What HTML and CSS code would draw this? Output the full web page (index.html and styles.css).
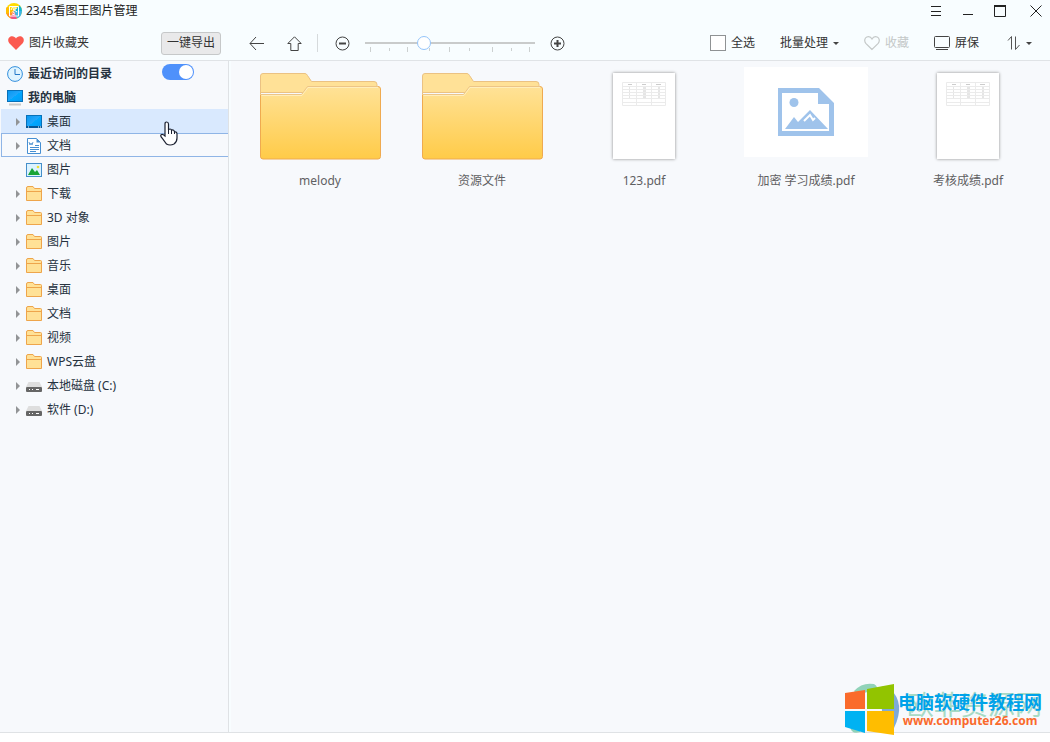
FILE: index.html
```html
<!DOCTYPE html>
<html lang="zh-CN">
<head>
<meta charset="utf-8">
<title>2345看图王图片管理</title>
<link rel="stylesheet" href="styles.css">
</head>
<body>
<svg class="defs" aria-hidden="true">
  <defs>
    <linearGradient id="front" x1="0" y1="0" x2="0" y2="1"><stop offset="0" stop-color="#ffe297"/><stop offset="1" stop-color="#ffcb48"/></linearGradient>
    <linearGradient id="screen" x1="0" y1="0" x2="1" y2="1"><stop offset="0" stop-color="#0796f0"/><stop offset=".5" stop-color="#22a6fb"/><stop offset=".5" stop-color="#00a8ff"/><stop offset="1" stop-color="#0698f2"/></linearGradient>
  </defs>
  <symbol id="folder" viewBox="0 0 16 16"><path d="M.5 14.500V2q0-1.500 1.500-1.500h5l1.500 2h6q1 0 1 1v11H.5z" fill="#ffe196" stroke="#eea54b"/><path d="M.5 5.500h15" stroke="#eea54b"/></symbol>
  <symbol id="drive" viewBox="0 0 16 16"><path d="M2.500 4h11L16 9H0z" fill="#dedede"/><rect y="9" width="16" height="5" rx="1" fill="#666"/><path d="M3 11.500h1m2 0h1m3 0h3" stroke="#fff"/></symbol>
  <symbol id="big-folder" viewBox="0 0 121 87"><path d="M.5 84V3Q.5.5 3 .5h42q1.500 0 2.500 2l4 6H114q3 0 3 3v8H.5z" fill="#ffe197" stroke="#ebc283"/><path d="M.5 83V21.500h41l6-8H118q2.500 0 2.500 2.500v67.500q0 2.500-2.500 2.500H3q-2.500 0-2.500-2.500z" fill="url(#front)"/><path d="M1 21.500h40.500l6-8H118" fill="none" stroke="#edc587"/><path d="M1.500 22.500H42l6-8h70" fill="none" stroke="#ffeebb"/><path d="M.5 22v61.500Q.5 86 3 86h115q2.500 0 2.500-2.500V16q0-2.500-2.500-2.500" fill="none" stroke="#efaa50"/></symbol>
  <symbol id="doc-table" viewBox="0 0 44 24"><path d="M.5.500h43v23H.5zM.5 4.500h43M.5 7.500h43M.5 10.500h43M.5 13.500h43M.5 16.500h43M.5 20.500h43M14.500 0v24M29.500 0v24" fill="none" stroke="#ebebeb"/><path d="M6 2.500h4m10 0h4m10 0h5M7 6h1m13 0h3m12 0h2M7 9h1m13 0h3m12 0h2M7 12h1m13 0h3m12 0h2M7 15h1m13 0h3m12 0h2" stroke="#ccc"/></symbol>
</svg>
<div class="window">
  <header class="titlebar">
    <svg class="logo" viewBox="0 0 16 16" aria-hidden="true"><circle cx="8" cy="8" r="8" fill="#ffdc00"/><path d="M1 4a8 8 0 0 0 3 11l4-7z" fill="#ff9426"/><path d="M1 4a8 8 0 0 0-.5 7L8 8z" fill="#ffc000"/><path d="M4 15a8 8 0 0 0 7 .4L8 8z" fill="#ef5488"/><path d="M11 15.400A8 8 0 0 0 16 8H8z" fill="#3cb6e8"/><path d="M16 8a8 8 0 0 0-2.500-5.800L8 8z" fill="#10b5d8"/><path d="M3.500 3.500h9v9.500h-9z" fill="none" stroke="#fff"/><path d="M6.500 4 5 7m2-2h3.500L6 9.500M7 6l4 3M7 9.500l2 .8M6 11l3 1" fill="none" stroke="#fff"/></svg>
    <h1 class="title">2345看图王图片管理</h1>
    <div class="window-controls">
      <button class="icon-button" aria-label="菜单"><svg width="12" height="12" viewBox="0 0 12 12"><path d="M1 1.500h10M1 6.500h10M1 10.500h10" stroke="#222"/></svg></button>
      <button class="icon-button" aria-label="最小化"><svg width="12" height="12" viewBox="0 0 12 12"><path d="M1 9.500h10" stroke="#222"/></svg></button>
      <button class="icon-button" aria-label="最大化"><svg width="12" height="12" viewBox="0 0 12 12"><path d="M.5 1v10.500h11V1" fill="none" stroke="#222"/><path d="M0 1h12" stroke="#222" stroke-width="2"/></svg></button>
      <button class="icon-button close" aria-label="关闭"><svg width="12" height="12" viewBox="0 0 12 12"><path d="M.5.500l11 11m0-11-11 11" stroke="#222"/></svg></button>
    </div>
  </header>

  <div class="toolbar">
    <div class="favorites">
      <svg width="16" height="16" viewBox="0 0 16 16" aria-hidden="true"><path d="M8 15 1.300 8.300C-.6 6 0 2.600 2.500 1.500 4.800.7 7 1.700 8 3.500 9 1.700 11.200.7 13.500 1.500 16 2.600 16.600 6 14.700 8.300z" fill="#fb5a50"/></svg>
      <span>图片收藏夹</span>
      <button class="export">一键导出</button>
    </div>
    <div class="tools">
      <div class="nav">
        <button class="icon-button" aria-label="后退"><svg width="15" height="15" viewBox="0 0 15 15"><path d="M7 1 1 7.500 7 14M1 7.500h14" fill="none" stroke="#444"/></svg></button>
        <button class="icon-button" aria-label="向上"><svg width="15" height="15" viewBox="0 0 15 15"><path d="M7.500.8.800 7.500h3v7h7.400v-7h3z" fill="none" stroke="#444"/></svg></button>
      </div>
      <span class="divider"></span>
      <div class="zoom">
        <button class="icon-button" aria-label="缩小"><svg width="15" height="15" viewBox="0 0 15 15"><circle cx="7.500" cy="7.500" r="6.500" fill="none" stroke="#444"/><path d="M4 7.500h7" stroke="#444" stroke-width="2"/></svg></button>
        <div class="slider">
          <input class="range" type="range" min="0" max="9" value="3" aria-label="缩略图大小">
          <svg class="ticks" viewBox="0 0 170 6" aria-hidden="true"><path d="M5.500 0v5M42.500 0v5M84.500 0v5M127.500 0v5M164.500 0v5M24.500 1v3M64.500 1v3M104.500 1v3M146.500 1v3" stroke="#ccd0d0"/></svg>
        </div>
        <button class="icon-button" aria-label="放大"><svg width="15" height="15" viewBox="0 0 15 15"><circle cx="7.500" cy="7.500" r="6.500" fill="none" stroke="#444"/><path d="M4 7.500h7M7.500 4v7" stroke="#444" stroke-width="2"/></svg></button>
      </div>
      <div class="actions">
        <label class="select-all"><input class="check" type="checkbox">全选</label>
        <button class="action">批量处理<span class="caret"></span></button>
        <button class="action" disabled><svg width="16" height="16" viewBox="0 0 16 16"><path d="M8 14.500 1.800 8.300C0 6 .6 3 2.800 2 5 1.200 7 2.200 8 4 9 2.200 11 1.200 13.200 2c2.200 1 2.800 4 1 6.300z" fill="none" stroke="#c4c8c8" stroke-width="1.200"/></svg>收藏</button>
        <button class="action"><svg width="16" height="16" viewBox="0 0 16 16"><rect x=".5" y="1.500" width="15" height="11" rx="1" fill="none" stroke="#444"/><path d="M2 14.500h12" stroke="#444"/></svg>屏保</button>
        <button class="action sort" aria-label="排序"><svg width="14" height="16" viewBox="0 0 14 16"><path d="M1 5.500 4.500 1.500v13M8.500 1.500v13L12.500 10" fill="none" stroke="#555"/></svg><span class="caret"></span></button>
      </div>
    </div>
  </div>

  <div class="body">
    <nav class="sidebar" aria-label="目录">
      <div class="group"><svg width="16" height="16" viewBox="0 0 16 16" aria-hidden="true"><circle cx="8" cy="8" r="7.400" fill="#dff4ff" stroke="#348fdc"/><path d="M8 3v5.500h5" fill="none" stroke="#2579c8"/></svg><label for="recent">最近访问的目录</label><input class="switch" id="recent" type="checkbox" checked></div>
      <div class="group"><svg width="16" height="16" viewBox="0 0 16 16" aria-hidden="true"><rect x=".5" y=".5" width="15" height="11" fill="url(#screen)" stroke="#0870b8"/><path d="M2 14.500h12" stroke="#c8c8c8" stroke-width="2"/></svg><span>我的电脑</span></div>
      <ul class="tree">
        <li class="node hovered"><span class="arrow"></span><svg width="16" height="16" viewBox="0 0 16 16" aria-hidden="true"><rect x=".5" y="1.500" width="15" height="12" fill="url(#screen)" stroke="#0770b8"/><path d="M0 13h16" stroke="#055796" stroke-width="2"/><path d="M2 13h1m9 0h1m1 0h1" stroke="#fff"/></svg><span>桌面</span></li>
        <li class="node selected"><span class="arrow"></span><svg width="16" height="16" viewBox="0 0 16 16" aria-hidden="true"><path d="M1.500.500h9l4 4v11h-13z" fill="#fff" stroke="#468fd2"/><path d="M10.500.500v4h4z" fill="#468fd2"/><path d="M3 4l1 3 1-2 1 2 1-3" fill="none" stroke="#5f9dd5"/><path d="M9 7.500h4M4 9.500h9M4 11.500h9M4 13.500h6" stroke="#468fd2"/></svg><span>文档</span></li>
        <li class="node"><span class="arrow none"></span><svg width="16" height="16" viewBox="0 0 16 16" aria-hidden="true"><rect x=".5" y="1.500" width="15" height="13" fill="#dcf3ff" stroke="#458fca"/><path d="m2 13 4-7 3 4 2-2 3 5z" fill="#18a437"/><circle cx="12" cy="5" r="1.300" fill="#f1df37"/></svg><span>图片</span></li>
        <li class="node"><span class="arrow"></span><svg width="16" height="16"><use href="#folder"/></svg><span>下载</span></li>
        <li class="node"><span class="arrow"></span><svg width="16" height="16"><use href="#folder"/></svg><span>3D 对象</span></li>
        <li class="node"><span class="arrow"></span><svg width="16" height="16"><use href="#folder"/></svg><span>图片</span></li>
        <li class="node"><span class="arrow"></span><svg width="16" height="16"><use href="#folder"/></svg><span>音乐</span></li>
        <li class="node"><span class="arrow"></span><svg width="16" height="16"><use href="#folder"/></svg><span>桌面</span></li>
        <li class="node"><span class="arrow"></span><svg width="16" height="16"><use href="#folder"/></svg><span>文档</span></li>
        <li class="node"><span class="arrow"></span><svg width="16" height="16"><use href="#folder"/></svg><span>视频</span></li>
        <li class="node"><span class="arrow"></span><svg width="16" height="16"><use href="#folder"/></svg><span>WPS云盘</span></li>
        <li class="node"><span class="arrow"></span><svg width="16" height="16"><use href="#drive"/></svg><span>本地磁盘 (C:)</span></li>
        <li class="node"><span class="arrow"></span><svg width="16" height="16"><use href="#drive"/></svg><span>软件 (D:)</span></li>
      </ul>
    </nav>
    <main class="files">
      <figure class="file"><div class="thumb"><svg width="121" height="87"><use href="#big-folder"/></svg></div><figcaption>melody</figcaption></figure>
      <figure class="file"><div class="thumb"><svg width="121" height="87"><use href="#big-folder"/></svg></div><figcaption>资源文件</figcaption></figure>
      <figure class="file"><div class="thumb"><div class="page"><svg width="44" height="24"><use href="#doc-table"/></svg></div></div><figcaption>123.pdf</figcaption></figure>
      <figure class="file"><div class="thumb blank"><svg width="56" height="48" viewBox="0 0 56 48"><path fill-rule="evenodd" d="M0 0h41l15 15v33H0zM4 5v38h47V16H40V5z" fill="#9fc3eb"/><circle cx="16" cy="14.500" r="4.500" fill="#9fc3eb"/><path d="m7 41 9-12 4 5 12-12 18 19z" fill="#9fc3eb"/><path d="m26 33 6-6 3 5 2-2" fill="none" stroke="#fff" stroke-width="2"/></svg></div><figcaption>加密 学习成绩.pdf</figcaption></figure>
      <figure class="file"><div class="thumb"><div class="page"><svg width="44" height="24"><use href="#doc-table"/></svg></div></div><figcaption>考核成绩.pdf</figcaption></figure>
    </main>
  </div>
  <footer class="status"></footer>

  <svg class="cursor" width="18" height="25" viewBox="0 0 18 25" aria-hidden="true"><path d="M5 15V3q0-2 1.700-2T8.500 3v6q0-1 1.500-1t1.500 1.500Q12 8.500 13.200 9t1.300 2q2.500-.5 2.500 2v4q0 4-3 6-4 2-7.500 0L2 17q-2-2-.8-3.300 1.300-1 3.800 1.300z" fill="#fff" stroke="#1b2030" stroke-width="1.200"/><path d="M8.500 8v5m3-4v4m3-3v3" stroke="#1b2030"/></svg>

  <aside class="watermark">
    <span class="ghost">欧菲资源网</span>
    <svg class="flag" width="62" height="56" viewBox="0 0 62 56" aria-hidden="true"><path d="M10 10Q18 1 30 3q5 3 2 7-10 0-18 5zM6 46q2 8 10 5l4-6z" fill="#91d3b9"/><path d="M46 8q16 14 4 39L38 30 36 7q4-4 10 1z" fill="#7eaad7"/><path d="M1 12 21 9v19H1z" fill="#fa6b2b"/><path d="M23 8 50 3v25H23z" fill="#92c400"/><path d="M1 30h20v22L1 46z" fill="#00b2f2"/><path d="M23 30h27v24l-27-4z" fill="#ffbd00"/></svg>
    <div class="brand"><strong class="brand-name">电脑软硬件教程网</strong><span class="brand-url">www.computer26.com</span></div>
  </aside>
</div>
</body>
</html>
```
FILE: styles.css
```css
* { box-sizing: border-box; }
body {
  margin: 0;
  background: #fff;
  color: #333;
  font: 12px/16px "Noto Sans", "Noto Sans CJK SC", sans-serif;
}
svg { display: block; flex: none; }
.defs { position: absolute; width: 0; height: 0; }
button { font: inherit; color: inherit; }
.window {
  position: relative;
  display: flex;
  flex-direction: column;
  min-height: 100vh;
}
.titlebar {
  display: flex;
  align-items: center;
  height: 24px;
  padding: 0 8px 2px 6px;
  gap: 4px;
  background: #f8fdff;
}
.logo { width: 16px; height: 16px; }
.title { margin: 0; font-size: 12px; font-weight: 400; color: #222; }
.window-controls { display: flex; gap: 20px; margin-left: auto; }
.close { margin-left: 4px; }
.icon-button {
  display: flex;
  padding: 0;
  border: 0;
  background: none;
}
.toolbar {
  display: flex;
  height: 37px;
  padding-top: 2px;
  border-bottom: 1px solid #e0e3e6;
  background: #f8fdff;
}
.favorites {
  display: flex;
  flex: none;
  align-items: center;
  width: 229px;
  padding: 0 8px;
  gap: 5px;
}
.export {
  height: 23px;
  margin-left: auto;
  padding: 0 5px;
  border: 1px solid #c6c8c9;
  border-radius: 3px;
  background: #e9e9ea;
}
.tools {
  display: flex;
  flex: 1;
  align-items: center;
  padding: 0 18px 0 20px;
}
.nav { display: flex; gap: 23px; }
.divider { width: 1px; height: 18px; margin: 0 17px 0 15px; background: #d6dadc; }
.zoom { display: flex; align-items: center; gap: 15px; }
.slider { position: relative; width: 170px; height: 16px; }
.range {
  display: block;
  width: 100%;
  height: 16px;
  margin: 0;
  appearance: none;
  background: linear-gradient(#c9cbcb, #c9cbcb) center / 100% 2px no-repeat;
}
.range::-webkit-slider-thumb {
  width: 14px;
  height: 14px;
  appearance: none;
  border: 1px solid #94c4fa;
  border-radius: 50%;
  background: #fff;
}
.ticks { position: absolute; top: 12px; left: 0; width: 100%; height: 6px; }
.actions { display: flex; align-items: center; gap: 25px; margin-left: auto; }
.select-all, .action { display: flex; align-items: center; gap: 5px; }
.action { padding: 0; border: 0; background: none; }
.action:disabled { color: #c4c8c8; }
.sort { margin-left: 3px; }
.check {
  width: 16px;
  height: 16px;
  margin: 0;
  appearance: none;
  border: 1px solid #8f9294;
  background: #fff;
}
.caret {
  border: 3px solid transparent;
  border-top-color: #444;
  border-bottom: 0;
}
.body { display: flex; flex: 1; background: #f7f9fc; }
.sidebar {
  flex: none;
  width: 229px;
  border-right: 1px solid #dfe2e5;
  color: #26323f;
}
.group {
  display: flex;
  align-items: center;
  height: 24px;
  padding: 2px 34px 0 7px;
  gap: 5px;
  font-weight: 700;
}
.switch {
  position: relative;
  width: 32px;
  height: 16px;
  margin: 0 0 4px auto;
  appearance: none;
  border-radius: 8px;
  background: #4f91fb;
}
.switch::after {
  content: "";
  position: absolute;
  top: 1px;
  right: 1px;
  width: 14px;
  height: 14px;
  border-radius: 50%;
  background: #fff;
}
.tree { margin: 0; padding: 0 0 0 1px; list-style: none; }
.node {
  display: flex;
  align-items: center;
  height: 24px;
  padding: 2px 0 0 15px;
  gap: 5px;
}
.hovered { background: #d9e9fe; }
.selected {
  padding-left: 14px;
  border: 1px solid #8fb5e6;
  border-right: 0;
}
.arrow {
  margin-right: 1px;
  border: 4px solid transparent;
  border-left-color: #929496;
  border-right: 0;
}
.none { visibility: hidden; }
.files {
  display: grid;
  flex: 1;
  grid-template-columns: repeat(auto-fill, 162px);
  align-content: start;
  padding: 6px 0 0 8px;
  border-left: 2px solid #f8fdff;
  color: #5f6062;
}
.file { display: flex; flex-direction: column; align-items: center; margin: 0; gap: 16px; }
.thumb { display: flex; align-items: center; justify-content: center; height: 90px; padding-top: 8px; }
.blank { align-self: stretch; margin: 0 19px; padding: 0; background: #fff; }
.page {
  width: 62px;
  height: 86px;
  padding: 9px;
  background: #fff;
  box-shadow: 0 0 3px #888;
}
.status { height: 10px; border-top: 1px solid #dfe2e5; background: #fff; }
.cursor { position: absolute; top: 121px; left: 160px; }
.watermark {
  position: absolute;
  right: 8px;
  bottom: 5px;
  display: flex;
  align-items: center;
}
.flag { margin-right: -8px; }
.brand { position: relative; display: flex; flex-direction: column; align-items: center; padding-top: 2px; }
.brand-name { font-size: 18px; line-height: 22px; color: #00a2e9; }
.brand-url { font-size: 12px; font-weight: 700; line-height: 16px; color: #fa6a2c; }
.ghost {
  position: absolute;
  right: 0;
  top: 8px;
  font-size: 27px;
  line-height: 32px;
  color: #a8dac5;
}
```
